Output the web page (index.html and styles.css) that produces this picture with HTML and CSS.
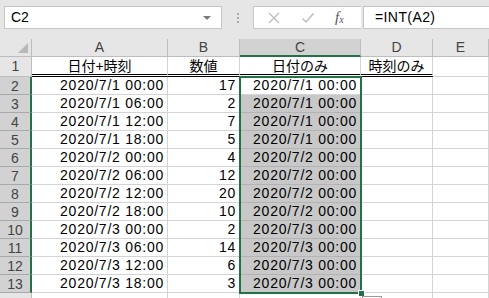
FILE: index.html
```html
<!DOCTYPE html>
<html lang="ja">
<head>
<meta charset="utf-8">
<title>Excel - INT</title>
<link rel="stylesheet" href="styles.css">
</head>
<body>
<div class="toolbar">
	<div class="namebox">C2<span class="drop"></span></div>
	<div class="grip"><i></i><i></i><i></i></div>
	<div class="fxbox">
		<svg class="ico" width="14" height="14" viewBox="0 0 14 14"><path d="M2 2L12 12M12 2L2 12" stroke="#bcbcbc" stroke-width="1.3" fill="none"/></svg>
		<svg class="ico" width="14" height="14" viewBox="0 0 14 14"><path d="M1.5 7.5L5 11L12.5 2.5" stroke="#bcbcbc" stroke-width="1.5" fill="none"/></svg>
		<span class="fx"><i>f</i><sub>x</sub></span>
	</div>
	<div class="formula">=INT(A2)</div>
</div>

<div class="sheet">
	<div class="corner"></div>
	<div class="ch">A</div><div class="ch">B</div><div class="ch cur">C</div><div class="ch">D</div><div class="ch">E</div>

	<div class="rh">1</div>
	<div class="c t dbl">日付+時刻</div><div class="c t dbl">数値</div><div class="c t dbl">日付のみ</div><div class="c t dbl">時刻のみ</div><div class="c"></div>

	<div class="rh on">2</div><div class="c n">2020/7/1 00:00</div><div class="c n">17</div><div class="c n">2020/7/1 00:00</div><div class="c"></div><div class="c"></div>
	<div class="rh on">3</div><div class="c n">2020/7/1 06:00</div><div class="c n">2</div><div class="c n g">2020/7/1 00:00</div><div class="c"></div><div class="c"></div>
	<div class="rh on">4</div><div class="c n">2020/7/1 12:00</div><div class="c n">7</div><div class="c n g">2020/7/1 00:00</div><div class="c"></div><div class="c"></div>
	<div class="rh on">5</div><div class="c n">2020/7/1 18:00</div><div class="c n">5</div><div class="c n g">2020/7/1 00:00</div><div class="c"></div><div class="c"></div>
	<div class="rh on">6</div><div class="c n">2020/7/2 00:00</div><div class="c n">4</div><div class="c n g">2020/7/2 00:00</div><div class="c"></div><div class="c"></div>
	<div class="rh on">7</div><div class="c n">2020/7/2 06:00</div><div class="c n">12</div><div class="c n g">2020/7/2 00:00</div><div class="c"></div><div class="c"></div>
	<div class="rh on">8</div><div class="c n">2020/7/2 12:00</div><div class="c n">20</div><div class="c n g">2020/7/2 00:00</div><div class="c"></div><div class="c"></div>
	<div class="rh on">9</div><div class="c n">2020/7/2 18:00</div><div class="c n">10</div><div class="c n g">2020/7/2 00:00</div><div class="c"></div><div class="c"></div>
	<div class="rh on">10</div><div class="c n">2020/7/3 00:00</div><div class="c n">2</div><div class="c n g">2020/7/3 00:00</div><div class="c"></div><div class="c"></div>
	<div class="rh on">11</div><div class="c n">2020/7/3 06:00</div><div class="c n">14</div><div class="c n g">2020/7/3 00:00</div><div class="c"></div><div class="c"></div>
	<div class="rh on">12</div><div class="c n">2020/7/3 12:00</div><div class="c n">6</div><div class="c n g">2020/7/3 00:00</div><div class="c"></div><div class="c"></div>
	<div class="rh on">13</div><div class="c n">2020/7/3 18:00</div><div class="c n">3</div><div class="c n g">2020/7/3 00:00</div><div class="c"></div><div class="c"></div>
	<div class="rh"></div><div class="c"></div><div class="c"></div><div class="c"></div><div class="c"></div><div class="c"></div>

	<!-- 選択範囲 C2:C13 -->
	<div class="sel"><i class="handle"></i><i class="qa"></i></div>
</div>
</body>
</html>
```

FILE: styles.css
```css
body{margin: 0;background: #fff;font-family: "Liberation Sans", "Noto Sans CJK JP", sans-serif;font-size: 14px;color: #000;overflow: hidden;}

.toolbar{display: flex;align-items: flex-start;height: 39px;box-sizing: border-box;padding-top: 6px;background: #e6e6e6;}
.namebox{position: relative;width: 218px;height: 23px;margin-left: 4px;box-sizing: border-box;border: 1px solid #c6c6c6;background: #fff;padding-left: 6px;line-height: 21px;}
.namebox .drop{position: absolute;right: 10px;top: 9px;border-left: 4px solid transparent;border-right: 4px solid transparent;border-top: 4px solid #7a7a7a;}
.grip{display: flex;flex-direction: column;gap: 2px;width: 31px;padding-top: 7px;align-items: center;}
.grip i{display: block;width: 2px;height: 2px;background: #a8a8a8;}
.fxbox{display: flex;align-items: center;gap: 20px;width: 108px;height: 23px;box-sizing: border-box;border: 1px solid #c6c6c6;border-right: none;background: #fff;padding-left: 13px;}
.fx{font-family: "Liberation Serif", serif;font-size: 15px;color: #555;white-space: nowrap;}
.fx sub{font-size: 10px;font-style: italic;vertical-align: -1px;}
.formula{flex: 1;height: 23px;box-sizing: border-box;border: 1px solid #c6c6c6;border-right: none;margin-left: 2px;background: #fff;padding-left: 11px;line-height: 21px;letter-spacing: 0.4px;}

.sheet{position: relative;display: grid;grid-template-columns: 32px 136px 72px 121px 72px 1fr;grid-template-rows: 18px 20px repeat(13, 18px);}
.sheet > div{box-sizing: border-box;}
.corner{position: relative;background: #e6e6e6;border-right: 1px solid #bdbdbd;border-bottom: 1px solid #bdbdbd;}
.corner::after{content: "";position: absolute;right: 3px;bottom: 3px;border-left: 10px solid transparent;border-bottom: 10px solid #b8b8b8;}
.ch{background: #e6e6e6;border-right: 1px solid #bdbdbd;border-bottom: 1px solid #bdbdbd;text-align: center;line-height: 17px;color: #444;}
.ch.cur{background: #d2d2d2;border-bottom: 2px solid #217346;}
.rh{background: #e6e6e6;border-right: 1px solid #bdbdbd;border-bottom: 1px solid #bdbdbd;text-align: center;color: #444;line-height: 18px;}
.rh.on{background: #d2d2d2;border-right: 2px solid #217346;border-bottom-color: #a9a9a9;}

.c{border-right: 1px solid #d4d4d4;border-bottom: 1px solid #d4d4d4;line-height: 17px;white-space: nowrap;overflow: hidden;}
.c.t{text-align: center;line-height: 18px;}
.c.dbl{border-bottom: 3px double #000;}
.c.n{text-align: right;padding-right: 3px;letter-spacing: 0.75px;}
.c.g{background: #c8c8c8;border-bottom-color: #b3b3b3;}

/* 選択枠：グリッド領域を基準に重ねる */
.sheet > .sel{position: absolute;grid-column: 4 / 5;grid-row: 3 / 15;top: -1px;left: -1px;right: -1px;bottom: -1px;border: 2px solid #217346;pointer-events: none;}
.sel .handle{position: absolute;right: -5px;bottom: -5px;width: 5px;height: 5px;background: #217346;border: 1px solid #fff;}
.sel .qa{position: absolute;right: -22px;bottom: -8px;width: 18px;height: 3px;border: 1px solid #9a9a9a;border-bottom: none;background: #fff;}
```
